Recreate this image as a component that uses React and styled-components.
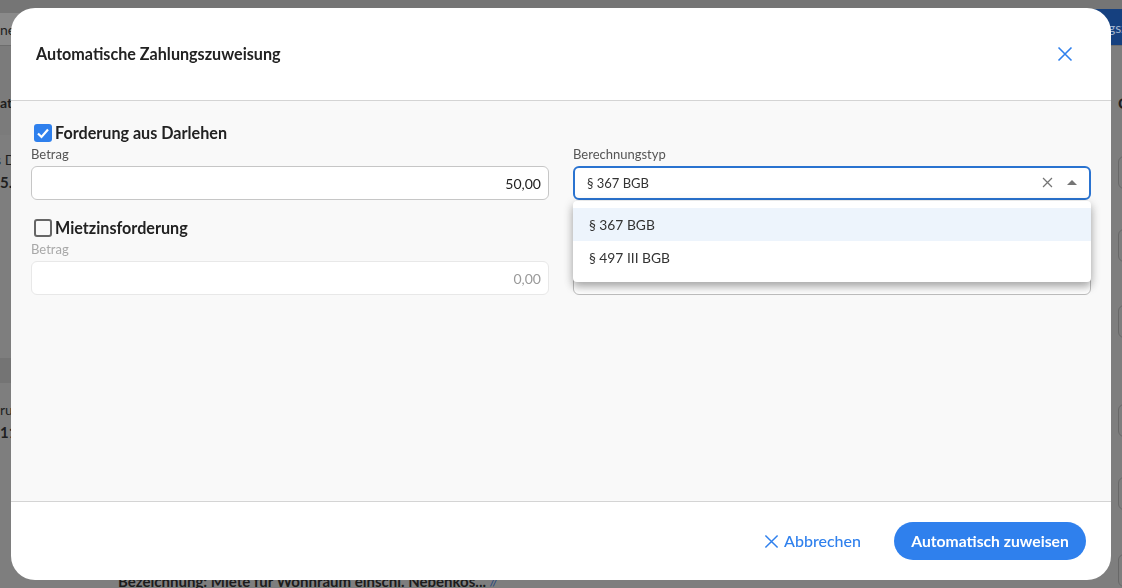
import React from 'react';
import styled, { createGlobalStyle } from 'styled-components';

const GlobalStyle = createGlobalStyle`
  html, body {
    margin: 0;
    padding: 0;
    height: 100%;
    overflow: hidden;
    font-family: 'Lato', 'Liberation Sans', sans-serif;
    color: #1f1f1f;
  }
  * {
    box-sizing: border-box;
  }
`;

/* page behind the dialog, only its edges stay visible */
const Page = styled.div`
  display: grid;
  grid-template-columns: 40px 1fr 40px;
  grid-template-rows: 13px 33px 1fr;
  width: 1122px;
  height: 588px;
  overflow: hidden;
  background: #7e7e7e;
`;

const TopStrip = styled.div`
  grid-column: 1 / -1;
  background: #757575;
`;

const Toolbar = styled.div`
  grid-column: 1 / -1;
  display: flex;
  justify-content: space-between;
  align-items: center;
  background: #8a8a8a;
  border-bottom: 1px solid #6d6d6d;
  font-size: 14px;
`;

const ToolbarTail = styled.span`
  display: block;
  width: 12px;
  overflow: hidden;
  white-space: nowrap;
`;

const BlueAction = styled.div`
  align-self: stretch;
  width: 40px;
  margin-top: -4px;
  padding: 10px 0 0 26px;
  background: #15407f;
  color: #9fb1cc;
  font-size: 14px;
  white-space: nowrap;
  overflow: hidden;
`;

const LeftEdge = styled.div`
  display: flex;
  flex-direction: column;
  overflow: hidden;
`;

const EdgeBlock = styled.div`
  height: ${(p) => p.$h}px;
  background: ${(p) => p.$bg || 'transparent'};
  font-size: 14px;
  font-weight: ${(p) => (p.$bold ? 700 : 400)};
  line-height: 22px;
  padding-top: ${(p) => p.$pt || 0}px;
  white-space: nowrap;
  overflow: hidden;
`;

const EdgeShifted = styled.div`
  margin-left: -5px;
`;

const EdgeBold = styled.div`
  font-size: 15px;
  font-weight: 700;
`;

const CenterEdge = styled.div`
  display: flex;
  align-items: flex-end;
  gap: 4px;
  padding: 0 0 0 78px;
  margin-bottom: -3px;
  overflow: hidden;
`;

const BackText = styled.span`
  font-size: 15px;
  font-weight: 700;
  color: #1c1c1c;
  white-space: nowrap;
  line-height: 20px;
`;

const BackEdit = styled.span`
  font-size: 13px;
  font-style: italic;
  color: #23467f;
  line-height: 20px;
`;

const RightEdge = styled.div`
  display: flex;
  flex-direction: column;
  padding-left: 36px;
  overflow: hidden;
`;

const BackInput = styled.div`
  flex: none;
  width: 30px;
  height: 33px;
  margin-top: ${(p) => p.$mt}px;
  border: 1px solid #686868;
  border-radius: 6px;
`;

const RightBold = styled.div`
  height: 20px;
  margin-top: 47px;
  font-size: 16px;
  font-weight: 700;
  line-height: 20px;
`;

const Backdrop = styled.div`
  position: fixed;
  inset: 0;
  display: flex;
  padding: 8px 11px;
`;

const Dialog = styled.div`
  display: flex;
  flex-direction: column;
  width: 1100px;
  height: 572px;
  border-radius: 24px;
  overflow: hidden;
  background: #fff;
`;

const Header = styled.header`
  display: flex;
  justify-content: space-between;
  align-items: center;
  flex: none;
  height: 93px;
  padding: 0 38px 0 25px;
  border-bottom: 1px solid #d4d4d4;
`;

const Title = styled.h2`
  margin: 0 0 2px;
  font-size: 16.15px;
  font-weight: 700;
  color: #222;
`;

const IconButton = styled.button`
  display: flex;
  padding: 0;
  border: 0;
  background: none;
  color: #2f80ed;
  cursor: pointer;
`;

const Body = styled.div`
  flex: 1;
  padding: 21px 20px 0;
  background: #f9f9f9;
`;

const Section = styled.section`
  display: grid;
  grid-template-columns: 518px 518px;
  column-gap: 24px;
  margin-bottom: 17px;
`;

const CheckRow = styled.label`
  grid-column: 1 / -1;
  display: flex;
  align-items: center;
  gap: 3px;
  height: 22px;
  padding: 0 0 2px 3px;
  font-size: 16.15px;
  font-weight: 700;
  color: #222;
`;

const CheckBox = styled.span`
  display: flex;
  align-items: center;
  justify-content: center;
  width: 18px;
  height: 18px;
  margin-bottom: -2px;
  border-radius: 3px;
  background: ${(p) => (p.$checked ? '#2f80ed' : 'transparent')};
  border: ${(p) => (p.$checked ? '0' : '2px solid #666')};
  color: #fff;
`;

const Field = styled.div`
  position: relative;
`;

const FieldLabel = styled.div`
  height: 22px;
  padding-top: 2px;
  font-size: 13px;
  line-height: 17px;
  color: ${(p) => (p.$disabled ? '#a8a8a8' : '#555')};
`;

const AmountInput = styled.div`
  display: flex;
  align-items: center;
  justify-content: flex-end;
  height: 34px;
  padding: 1px 7px 0 0;
  font-size: 14px;
  color: ${(p) => (p.$disabled ? '#9a9a9a' : '#222')};
  background: #fff;
  border: 1px solid ${(p) => (p.$disabled ? '#e8e8e8' : '#c6c6c6')};
  border-radius: 6px;
`;

const SelectBox = styled.div`
  display: flex;
  align-items: center;
  height: 34px;
  padding: 0 12px ${(p) => (p.$open ? 1 : 4)}px ${(p) => (p.$open ? 12 : 13)}px;
  font-size: 13px;
  color: #333;
  background: #fff;
  border: ${(p) => (p.$open ? '2px solid #2a73d0' : '1px solid #bdbdbd')};
  border-radius: 6px;
`;

const SelectValue = styled.span`
  flex: 1;
`;

const ClearIcon = styled.span`
  display: flex;
  margin-right: 14px;
  color: #757575;
`;

const Caret = styled.span`
  width: 0;
  height: 0;
  border-left: 5px solid transparent;
  border-right: 5px solid transparent;
  border-bottom: 5px solid #757575;
`;

const Menu = styled.ul`
  position: absolute;
  top: 57px;
  left: 0;
  right: 0;
  z-index: 2;
  margin: 0;
  padding: 7px 0 8px;
  list-style: none;
  background: #fff;
  border-radius: 4px;
  box-shadow: 0 5px 8px rgba(0, 0, 0, 0.28), 0 2px 12px rgba(0, 0, 0, 0.12);
`;

const MenuItem = styled.li`
  display: flex;
  align-items: center;
  height: 33px;
  padding-left: 16px;
  font-size: 13.8px;
  color: #333;
  background: ${(p) => (p.$active ? '#edf4fc' : 'transparent')};
`;

const Footer = styled.footer`
  display: flex;
  justify-content: flex-end;
  align-items: center;
  flex: none;
  gap: 33px;
  height: 79px;
  padding: 0 25px 0 0;
  border-top: 1px solid #d4d4d4;
`;

const CancelButton = styled.button`
  display: flex;
  align-items: center;
  gap: 5px;
  padding: 0 0 2px;
  border: 0;
  background: none;
  font-family: inherit;
  font-size: 16px;
  font-weight: 500;
  color: #2f80ed;
  cursor: pointer;

  svg {
    margin-bottom: -2px;
  }
`;

const PrimaryButton = styled.button`
  width: 192px;
  height: 38px;
  border: 0;
  border-radius: 19px;
  background: #2f80ed;
  font-family: inherit;
  font-size: 15.7px;
  font-weight: 700;
  color: #fff;
  cursor: pointer;
`;

const Cross = ({ size, weight = 1.6 }) => (
  <svg width={size} height={size} viewBox="0 0 16 16" fill="none" stroke="currentColor" strokeWidth={weight}>
    <path d="M1.5 1.5 14.5 14.5M14.5 1.5 1.5 14.5" />
  </svg>
);

const Tick = () => (
  <svg width="14" height="14" viewBox="0 0 14 14" fill="none" stroke="currentColor" strokeWidth="2.2">
    <path d="M2 7.5 5.5 11 12 3.5" />
  </svg>
);

const App = () => {
  return (
    <>
      <GlobalStyle />
      <Page>
        <TopStrip />
        <Toolbar>
          <ToolbarTail>ne</ToolbarTail>
          <BlueAction>gsz</BlueAction>
        </Toolbar>
        <LeftEdge>
          <EdgeBlock $h={89} $bg="#7b7b7b" $bold $pt={46}>ato</EdgeBlock>
          <EdgeBlock $h={223} $pt={14}>
            <EdgeShifted>s D</EdgeShifted>
            <EdgeBold>5.</EdgeBold>
          </EdgeBlock>
          <EdgeBlock $h={25} $bg="#747474" />
          <EdgeBlock $h={80} $pt={16}>
            ru
            <EdgeBold>11</EdgeBold>
          </EdgeBlock>
        </LeftEdge>
        <CenterEdge>
          <BackText>Bezeichnung: Miete für Wohnraum einschl. Nebenkos...</BackText>
          <BackEdit>//</BackEdit>
        </CenterEdge>
        <RightEdge>
          <RightBold>C</RightBold>
          <BackInput $mt={43} />
          <BackInput $mt={40} />
          <BackInput $mt={43} />
          <BackInput $mt={66} />
          <BackInput $mt={40} />
          <BackInput $mt={44} />
        </RightEdge>
      </Page>

      <Backdrop>
        <Dialog>
          <Header>
            <Title>Automatische Zahlungszuweisung</Title>
            <IconButton aria-label="Schließen">
              <Cross size={16} />
            </IconButton>
          </Header>

          <Body>
            <Section>
              <CheckRow>
                <CheckBox $checked>
                  <Tick />
                </CheckBox>
                Forderung aus Darlehen
              </CheckRow>
              <Field>
                <FieldLabel>Betrag</FieldLabel>
                <AmountInput>50,00</AmountInput>
              </Field>
              <Field>
                <FieldLabel>Berechnungstyp</FieldLabel>
                <SelectBox $open>
                  <SelectValue>§ 367 BGB</SelectValue>
                  <ClearIcon>
                    <Cross size={11} weight={1.8} />
                  </ClearIcon>
                  <Caret />
                </SelectBox>
                <Menu>
                  <MenuItem $active>§ 367 BGB</MenuItem>
                  <MenuItem>§ 497 III BGB</MenuItem>
                </Menu>
              </Field>
            </Section>

            <Section>
              <CheckRow>
                <CheckBox />
                Mietzinsforderung
              </CheckRow>
              <Field>
                <FieldLabel $disabled>Betrag</FieldLabel>
                <AmountInput $disabled>0,00</AmountInput>
              </Field>
              <Field>
                <FieldLabel $disabled>Berechnungstyp</FieldLabel>
                <SelectBox>
                  <SelectValue>§ 367 BGB</SelectValue>
                </SelectBox>
              </Field>
            </Section>
          </Body>

          <Footer>
            <CancelButton>
              <Cross size={15} />
              Abbrechen
            </CancelButton>
            <PrimaryButton>Automatisch zuweisen</PrimaryButton>
          </Footer>
        </Dialog>
      </Backdrop>
    </>
  );
};

export default App;
